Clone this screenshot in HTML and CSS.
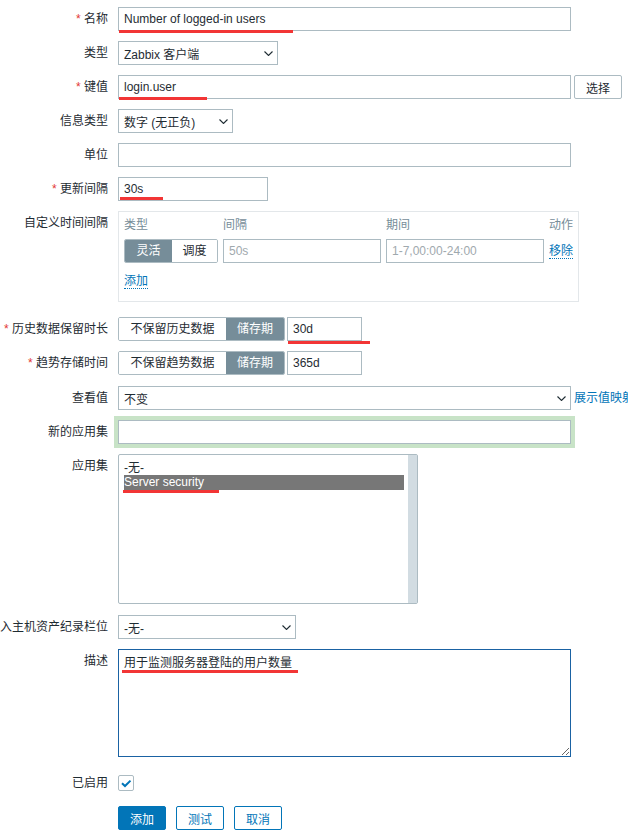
FILE: index.html
```html
<!DOCTYPE html>
<html lang="zh-CN">
<head>
<meta charset="utf-8">
<title>监控项</title>
<link rel="stylesheet" href="styles.css">
</head>
<body>
<form class="form">
  <div class="row">
    <div class="label"><span><span class="req">*</span> 名称</span></div>
    <div class="field">
      <input class="input w-full" type="text" value="Number of logged-in users">
      <span class="mark mark-name"></span>
    </div>
  </div>

  <div class="row">
    <div class="label"><span>类型</span></div>
    <div class="select w-type"><span>Zabbix 客户端</span><svg class="chev" width="9" height="5" viewBox="0 0 9 5"><path d="M0.5 0.5 L4.5 4.5 L8.5 0.5" fill="none" stroke="#1f2c33" stroke-width="1.1"/></svg></div>
  </div>

  <div class="row">
    <div class="label"><span><span class="req">*</span> 键值</span></div>
    <div class="field">
      <input class="input w-full" type="text" value="login.user">
      <span class="mark mark-key"></span>
    </div>
    <button type="button" class="btn-alt btn-select">选择</button>
  </div>

  <div class="row">
    <div class="label"><span>信息类型</span></div>
    <div class="select w-info"><span>数字 (无正负)</span><svg class="chev" width="9" height="5" viewBox="0 0 9 5"><path d="M0.5 0.5 L4.5 4.5 L8.5 0.5" fill="none" stroke="#1f2c33" stroke-width="1.1"/></svg></div>
  </div>

  <div class="row">
    <div class="label"><span>单位</span></div>
    <input class="input w-full" type="text" value="">
  </div>

  <div class="row">
    <div class="label"><span><span class="req">*</span> 更新间隔</span></div>
    <div class="field">
      <input class="input w-interval" type="text" value="30s">
      <span class="mark mark-interval"></span>
    </div>
  </div>

  <div class="row row-after-box">
    <div class="label"><span>自定义时间间隔</span></div>
    <div class="box">
      <div class="box-grid">
        <div class="th">类型</div>
        <div class="th">间隔</div>
        <div class="th">期间</div>
        <div class="th">动作</div>

        <div class="seg">
          <span class="seg-item seg-active w-flex">灵活</span>
          <span class="seg-item w-sched">调度</span>
        </div>
        <input class="input w-cell" type="text" placeholder="50s">
        <input class="input w-cell" type="text" placeholder="1-7,00:00-24:00">
        <div class="action"><a class="link-dotted">移除</a></div>
      </div>
      <div class="box-add"><a class="link-dotted">添加</a></div>
    </div>
  </div>

  <div class="row">
    <div class="label"><span><span class="req">*</span> 历史数据保留时长</span></div>
    <div class="seg">
      <span class="seg-item w-keep">不保留历史数据</span>
      <span class="seg-item seg-active w-store">储存期</span>
    </div>
    <div class="field after-seg">
      <input class="input w-days" type="text" value="30d">
      <span class="mark mark-days"></span>
    </div>
  </div>

  <div class="row">
    <div class="label"><span><span class="req">*</span> 趋势存储时间</span></div>
    <div class="seg">
      <span class="seg-item w-keep">不保留趋势数据</span>
      <span class="seg-item seg-active w-store">储存期</span>
    </div>
    <input class="input w-days after-seg" type="text" value="365d">
  </div>

  <div class="row gap-plus">
    <div class="label"><span>查看值</span></div>
    <div class="select w-full"><span>不变</span><svg class="chev" width="9" height="5" viewBox="0 0 9 5"><path d="M0.5 0.5 L4.5 4.5 L8.5 0.5" fill="none" stroke="#1f2c33" stroke-width="1.1"/></svg></div>
    <a class="link link-map">展示值映射</a>
  </div>

  <div class="row">
    <div class="label"><span>新的应用集</span></div>
    <input class="input w-full input-glow" type="text" value="">
  </div>

  <div class="row">
    <div class="label"><span>应用集</span></div>
    <div class="field listbox">
      <div class="list-items">
        <div class="list-item">-无-</div>
        <div class="list-item list-selected">Server security</div>
      </div>
      <div class="list-scroll"></div>
      <span class="mark mark-app"></span>
    </div>
  </div>

  <div class="row gap-plus">
    <div class="label"><span>填入主机资产纪录栏位</span></div>
    <div class="select w-inv"><span>-无-</span><svg class="chev" width="9" height="5" viewBox="0 0 9 5"><path d="M0.5 0.5 L4.5 4.5 L8.5 0.5" fill="none" stroke="#1f2c33" stroke-width="1.1"/></svg></div>
  </div>

  <div class="row">
    <div class="label"><span>描述</span></div>
    <div class="field">
      <textarea class="textarea">用于监测服务器登陆的用户数量</textarea>
      <span class="mark mark-desc"></span>
    </div>
  </div>

  <div class="row row-check">
    <div class="label"><span>已启用</span></div>
    <div class="check-wrap">
      <span class="checkbox"><svg width="14" height="14" viewBox="0 0 14 14"><path d="M3 7.2 L6 10 L11.5 4.6" fill="none" stroke="#0275b8" stroke-width="2"/></svg></span>
    </div>
  </div>

  <div class="row row-buttons">
    <div class="label"></div>
    <div class="buttons">
      <button type="button" class="btn-main">添加</button>
      <button type="button" class="btn-alt">测试</button>
      <button type="button" class="btn-alt">取消</button>
    </div>
  </div>
</form>
</body>
</html>
```

FILE: styles.css
```css
* {
  box-sizing: border-box;
}

html,
body {
  margin: 0;
  padding: 0;
  overflow: hidden;
  background: #ffffff;
}

body {
  font-family: "Liberation Sans", "Noto Sans CJK SC", sans-serif;
  font-size: 12px;
  color: #1f2c33;
}

.form {
  display: flex;
  flex-direction: column;
  gap: 10px;
  padding-top: 7px;
  margin: 0;
}

.row {
  display: flex;
  align-items: flex-start;
  gap: 10px;
  white-space: nowrap;
}

.row-after-box {
  margin-bottom: 5px;
}

.gap-plus {
  margin-top: 1px;
}

.row-check {
  margin-top: 4px;
}

.row-buttons {
  margin-top: 1px;
}

.label {
  flex: none;
  width: 108px;
  display: flex;
  justify-content: flex-end;
  line-height: 24px;
  white-space: nowrap;
}

.req {
  color: #e33734;
}

.field {
  position: relative;
  flex: none;
}

.input {
  display: block;
  flex: none;
  height: 24px;
  margin: 0;
  padding: 0 5px;
  border: 1px solid #acbbc2;
  border-radius: 0;
  background: #ffffff;
  font-family: inherit;
  font-size: 12px;
  color: #1f2c33;
  outline: none;
}

.input::placeholder {
  color: #9fa9ae;
}

.w-full {
  width: 453px;
}

.w-interval {
  width: 150px;
}

.w-days {
  width: 75px;
}

.w-cell {
  width: 158px;
}

.after-seg {
  margin-left: -8px;
}

.input-glow {
  box-shadow: 0 0 0 4px #c8e3c7;
}

.select {
  flex: none;
  height: 24px;
  display: flex;
  align-items: center;
  justify-content: space-between;
  padding: 0 4px 0 5px;
  border: 1px solid #acbbc2;
  background: #ffffff;
}

.w-type {
  width: 160px;
}

.w-info {
  width: 115px;
}

.w-inv {
  width: 178px;
}

.chev {
  display: block;
  flex: none;
}

.btn-alt,
.btn-main {
  height: 24px;
  width: 48px;
  margin: 0;
  padding: 0;
  border-radius: 2px;
  font-family: inherit;
  font-size: 12px;
  cursor: pointer;
}

.btn-alt {
  border: 1px solid #0275b8;
  background: #ffffff;
  color: #0275b8;
}

.btn-main {
  border: 1px solid #0275b8;
  background: #0275b8;
  color: #ffffff;
}

.btn-select {
  margin-left: -7px;
  border-color: #acbbc2;
  color: #1f2c33;
}

.link {
  color: #0275b8;
  line-height: 24px;
  cursor: pointer;
}

.link-map {
  margin-left: -7px;
}

.link-dotted {
  color: #0275b8;
  border-bottom: 1px dotted #0275b8;
  cursor: pointer;
}

/* custom interval box */
.box {
  flex: none;
  width: 461px;
  height: 91px;
  border: 1px solid #e3e7ea;
  padding: 5px 3px 0 5px;
}

.box-grid {
  display: grid;
  grid-template-columns: 94px 158px 158px 1fr;
  column-gap: 5px;
  row-gap: 6px;
  align-items: center;
}

.th {
  color: #768d99;
  line-height: 16px;
}

.action {
  line-height: 24px;
}

.box-add {
  margin-top: 11px;
  line-height: 14px;
}

/* segmented radio */
.seg {
  flex: none;
  display: flex;
  height: 24px;
  border: 1px solid #acbbc2;
  border-radius: 2px;
  overflow: hidden;
}

.seg-item {
  display: block;
  height: 22px;
  line-height: 22px;
  text-align: center;
  color: #1f2c33;
  background: #ffffff;
}

.seg-active {
  background: #768d99;
  color: #ffffff;
}

.w-keep {
  width: 107px;
}

.w-store {
  width: 58px;
}

.w-flex {
  width: 47px;
}

.w-sched {
  width: 45px;
}

/* listbox */
.listbox {
  width: 300px;
  height: 150px;
  display: flex;
  border: 1px solid #acbbc2;
  border-radius: 2px;
}

.list-items {
  flex: 1;
  padding: 6px 4px 0 5px;
}

.list-item {
  height: 14px;
  line-height: 14px;
}

.list-selected {
  background: #777777;
  color: #ffffff;
  height: 15px;
  line-height: 15px;
}

.list-scroll {
  flex: none;
  width: 9px;
  background: #d2dce2;
}

/* textarea */
.textarea {
  display: block;
  width: 453px;
  height: 108px;
  margin: 0;
  padding: 6px 5px 5px;
  border: 1px solid #1a62a3;
  font-family: inherit;
  font-size: 12px;
  line-height: 14px;
  color: #1f2c33;
  outline: none;
  resize: both;
}

/* checkbox */
.check-wrap {
  height: 24px;
  display: flex;
  align-items: center;
}

.checkbox {
  display: flex;
  align-items: center;
  justify-content: center;
  width: 16px;
  height: 16px;
  border: 1px solid #acbbc2;
  border-radius: 2px;
  background: #ffffff;
}

.buttons {
  display: flex;
  gap: 10px;
}

/* red annotation underlines */
.mark {
  position: absolute;
  height: 3px;
  background: #f23535;
}

.mark-name {
  left: 1px;
  top: 23px;
  width: 174px;
}

.mark-key {
  left: 1px;
  top: 22px;
  width: 88px;
}

.mark-interval {
  left: 2px;
  top: 20px;
  width: 43px;
}

.mark-days {
  left: 1px;
  top: 24px;
  width: 82px;
}

.mark-app {
  left: 4px;
  top: 35px;
  width: 96px;
}

.mark-desc {
  left: 4px;
  top: 21px;
  width: 176px;
}
```
